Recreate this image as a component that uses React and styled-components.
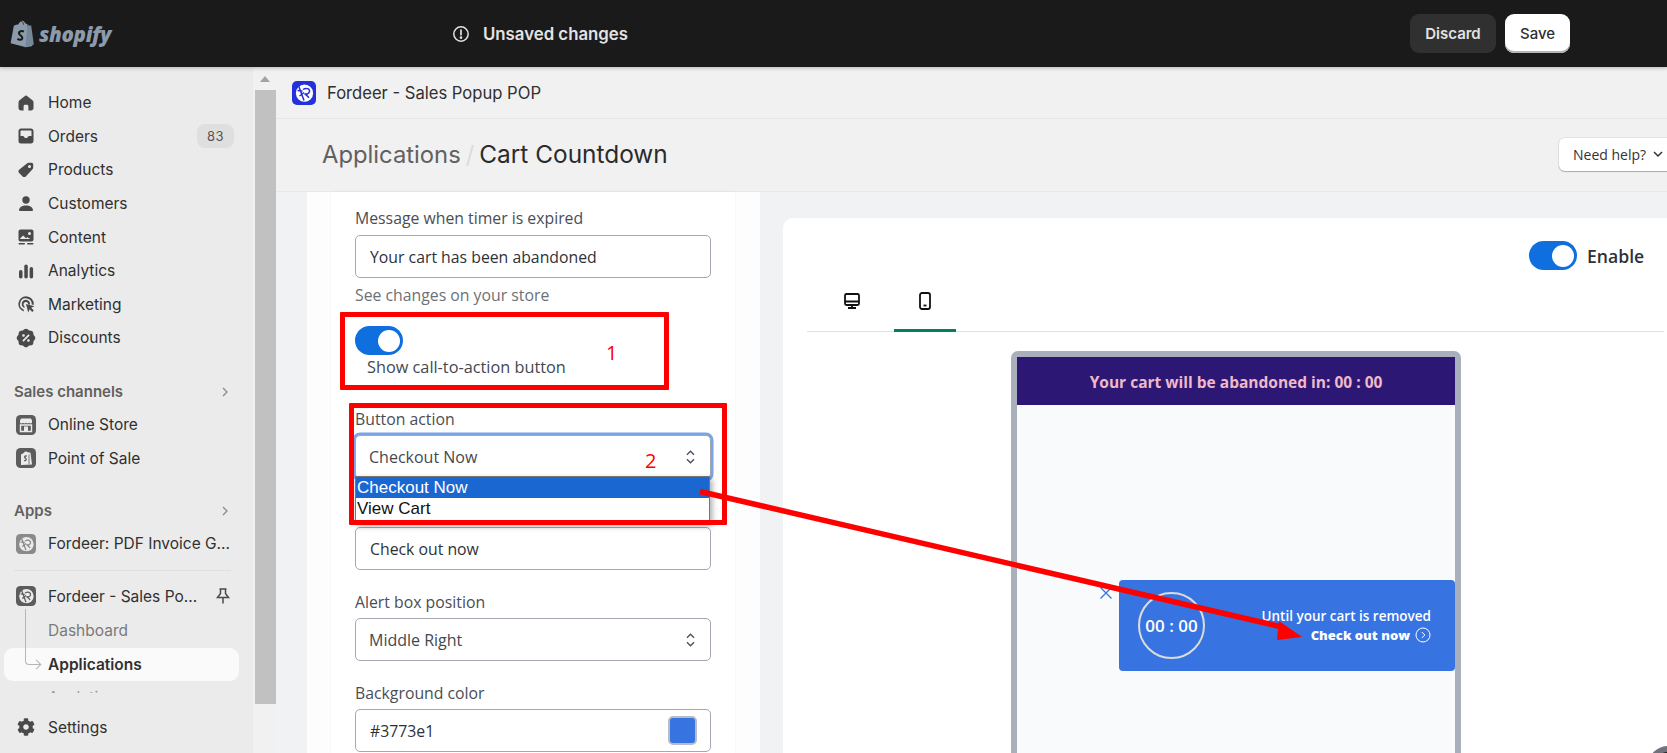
import styled, { createGlobalStyle } from 'styled-components';
import { FaCog } from 'react-icons/fa';
import { RiDiscountPercentFill } from 'react-icons/ri';

const GlobalStyle = createGlobalStyle`
  html, body { margin: 0; padding: 0; height: 100%; overflow: hidden; background: #f1f1f1; }
  * { box-sizing: border-box; }
`;

const Ico = ({ children }) => (
  <svg width="20" height="20" viewBox="0 0 20 20" fill="#4a4a4a">{children}</svg>
);

const HomeIcon = () => (
  <Ico><path d="M10 2.600c-.5 0-1 .2-1.400.6L3.500 7.300c-.7.6-1 1.300-1 2.200v5.500c0 1.400 1.100 2.500 2.500 2.500h2.600v-4.200c0-.9.700-1.600 1.500-1.600h1.800c.8 0 1.500.7 1.500 1.600v4.200H15c1.400 0 2.500-1.100 2.500-2.500V9.500c0-.9-.3-1.600-1-2.200l-5.100-4.100c-.4-.4-.9-.6-1.400-.6z" /></Ico>
);
const OrdersIcon = () => (
  <Ico><path fillRule="evenodd" d="M5 2.500h10c1.400 0 2.500 1.100 2.500 2.500v10c0 1.400-1.100 2.500-2.500 2.500H5A2.500 2.500 0 0 1 2.500 15V5C2.500 3.600 3.600 2.500 5 2.500zM4.500 10V5.300c0-.5.300-.8.800-.8h9.400c.5 0 .8.300.8.800V10h-2.300c-.6 0-1 .3-1.200.8-.3.800-1.100 1.300-2 1.300s-1.700-.5-2-1.300c-.2-.5-.6-.8-1.200-.8H4.500z" /></Ico>
);
const TagIcon = () => (
  <Ico><path fillRule="evenodd" d="M12.800 2.800h2.700c1 0 1.700.7 1.700 1.700v3c0 .8-.3 1.500-.9 2L9.800 16.400c-.9.900-2.300.9-3.200 0l-3.500-3.400c-.9-.9-.9-2.300 0-3.200l7.500-6.100c.6-.6 1.400-.9 2.200-.9zM13.500 8a1.500 1.500 0 1 0 0-3 1.500 1.500 0 0 0 0 3z" /></Ico>
);
const PersonIcon = () => (
  <Ico><circle cx="10" cy="6" r="3.700" /><path d="M3 16.300c0-2.900 3-4.900 7-4.900s7 2 7 4.900c0 .5-.4.800-.8.800H3.800c-.4 0-.8-.3-.8-.8z" /></Ico>
);
const ContentIcon = () => (
  <Ico>
    <path fillRule="evenodd" d="M4.500 2.500h11c1 0 2 .9 2 2v8c0 1-1 2-2 2h-11c-1 0-2-1-2-2v-8c0-1.100 1-2 2-2zM4 11.500l3.200-3 2.800 2.700 1.400-1 3 1.800H4.500zM13.500 5a1.500 1.500 0 1 0 0 3 1.500 1.500 0 0 0 0-3z" />
    <rect x="2.500" y="16" width="6.500" height="1.500" rx=".7" /><rect x="11" y="16" width="6.500" height="1.500" rx=".7" />
  </Ico>
);
const AnalyticsIcon = () => (
  <Ico><rect x="3" y="9" width="3.500" height="8.500" rx="1.700" /><rect x="8.300" y="3.500" width="3.500" height="14" rx="1.700" /><rect x="13.600" y="6" width="3.500" height="11.500" rx="1.700" /></Ico>
);
const MarketingIcon = () => (
  <Ico>
    <path d="M10 2.200a7.800 7.800 0 0 0-2 15.300l-.4-2A5.800 5.800 0 1 1 15.700 10.500l2 .5A7.800 7.800 0 0 0 10 2.200z" />
    <path d="M10 5.800a4.200 4.200 0 0 0-1.300 8.200l-.4-2a2.300 2.300 0 1 1 3.800-1.700l1.900.4A4.200 4.200 0 0 0 10 5.800z" />
    <path d="M10 10l8.500 2.300-3.300 1.500 2.600 2.600-1.600 1.500-2.500-2.600-1.500 3.200z" />
  </Ico>
);
const DiscountIcon = () => <RiDiscountPercentFill size={20} color="#4a4a4a" style={{ transform: 'scale(1.05)' }} />;
const ChannelIcon = ({ children }) => (
  <svg width="20" height="20" viewBox="0 0 20 20">
    <rect x="0" y="0" width="20" height="20" rx="4.500" fill="#5c5c5c" />
    {children}
  </svg>
);
const StoreIcon = () => (
  <ChannelIcon>
    <path d="M4 5.500 5 3.500h10l1 2v2.200c-.6 1-2.300 1-3 0-.7 1-2.300 1-3 0-.7 1-2.300 1-3 0-.7 1-2.400 1-3 0z" fill="#ebebeb" />
    <path d="M4.500 10h11v6.500h-11z" fill="none" stroke="#ebebeb" strokeWidth="1.400" />
    <rect x="8" y="11.500" width="4" height="5" fill="#ebebeb" />
  </ChannelIcon>
);
const PosIcon = () => (
  <ChannelIcon>
    <path d="M5 6.500 8 4.800c.8-1.400 2.300-1.500 3-.8l3.500.7L16 16.500 5 17z" fill="#ebebeb" />
    <path d="M10.800 8.200c-1.800-.7-3 .8-1.300 2 1.600 1.100.5 3-1.500 2.200" fill="none" stroke="#5c5c5c" strokeWidth="1.300" />
    <path d="M13 6.500v9.500" stroke="#5c5c5c" strokeWidth=".8" />
  </ChannelIcon>
);

// small feathered mark used for the Fordeer app, tile colour varies
const FordeerLogo = ({ size = 20, tile = '#5c5c5c', disc = '#ebebeb' }) => (
  <svg width={size} height={size} viewBox="0 0 24 24">
    <rect width="24" height="24" rx="5" fill={tile} />
    <circle cx="12.500" cy="12.200" r="8.600" fill={disc} />
    <path d="M6.500 4.500 12 19.500M5.500 9.500 10.500 10M7.500 15 12 11.500M11 8.500c3.200-2.200 7-.8 6.500 2.200-.3 2-3 2.600-5 2 2 .8 3 2.500 4.500 4" fill="none" stroke={tile} strokeWidth="1.500" />
  </svg>
);

const PinIcon = () => (
  <svg width="18" height="18" viewBox="0 0 18 18" fill="none" stroke="#4a4a4a" strokeWidth="1.500">
    <path d="M5.500 2h7M6.500 2v4.500L3.500 10.500h11L11.500 6.500V2M9 10.500V16.500" />
  </svg>
);
const Chevron = () => (
  <svg width="12" height="12" viewBox="0 0 12 12" fill="none" stroke="#8a8a8a" strokeWidth="1.300"><path d="M4 2l4 4-4 4" /></svg>
);
const UpDown = () => (
  <svg width="11" height="16" viewBox="0 0 12 18" fill="none" stroke="#4a515b" strokeWidth="1.500"><path d="M2 6.500 6 2.500l4 4M2 11.500l4 4 4-4" /></svg>
);
const DesktopIcon = () => (
  <svg width="18" height="18" viewBox="0 0 18 18" fill="none" stroke="#111" strokeWidth="1.800">
    <rect x="2" y="2" width="14" height="11" rx="1.500" /><path d="M2 9.500h14M9 13v3M5 16h8" />
  </svg>
);
const MobileIcon = () => (
  <svg width="18" height="18" viewBox="0 0 18 18" fill="none" stroke="#111" strokeWidth="1.800">
    <rect x="4" y="1" width="10" height="16" rx="2" /><path d="M7.500 13.500h3" />
  </svg>
);

const App = () => {
  return (
    <Page>
      <GlobalStyle />
      <TopBar>
        <LogoSlot>
          <svg width="25" height="29" viewBox="0 0 31 34">
            <path d="M2 29 6 7.500l6-2.500C13 2 15.500 .5 17.500 1.500c1 .3 2.500 2 3 3l2 .7L29 32.500 21 34z" fill="#8c9bac" />
            <path d="M20.500 33.700 23 5.500l2 1.500 2.500.2 3.300 23.300z" fill="#76879a" />
            <path d="M10.500 6.500c.7-3 3-5 5-4.500 1.500.3 2.500 2.300 2.500 4" fill="none" stroke="#1a1a1a" strokeWidth="1" />
            <path d="M18.500 14.500c-4-1.800-7.500 .7-5.500 3.500 1.300 1.700 4 2.500 3.500 5-.5 2.300-3.800 2.300-6 .7" fill="none" stroke="#1a1a1a" strokeWidth="2.600" />
          </svg>
          <LogoText>shopify</LogoText>
        </LogoSlot>
        <SaveNote>
          <svg width="18" height="18" viewBox="0 0 18 18" fill="none" stroke="#e3e3e3" strokeWidth="1.500">
            <circle cx="9" cy="9" r="7.200" /><path d="M9 5v4.700" strokeLinecap="round" strokeWidth="1.700" /><circle cx="9" cy="12.600" r=".6" fill="#e3e3e3" />
          </svg>
          <span>Unsaved changes</span>
        </SaveNote>
        <BarActions>
          <DiscardBtn>Discard</DiscardBtn>
          <SaveBtn>Save</SaveBtn>
        </BarActions>
      </TopBar>

      <Body>
        <Sidebar>
          <NavGroup>
            <NavItem><HomeIcon /><NavText>Home</NavText></NavItem>
            <NavItem><OrdersIcon /><NavText>Orders</NavText><Badge>83</Badge></NavItem>
            <NavItem><TagIcon /><NavText>Products</NavText></NavItem>
            <NavItem><PersonIcon /><NavText>Customers</NavText></NavItem>
            <NavItem><ContentIcon /><NavText>Content</NavText></NavItem>
            <NavItem><AnalyticsIcon /><NavText>Analytics</NavText></NavItem>
            <NavItem><MarketingIcon /><NavText>Marketing</NavText></NavItem>
            <NavItem><DiscountIcon /><NavText>Discounts</NavText></NavItem>
          </NavGroup>
          <SectionHead $top={25}>Sales channels<Chevron /></SectionHead>
          <NavItem><StoreIcon /><NavText>Online Store</NavText></NavItem>
          <NavItem><PosIcon /><NavText>Point of Sale</NavText></NavItem>
          <SectionHead $top={24}>Apps<Chevron /></SectionHead>
          <NavItem><FordeerLogo tile="#8a8a8a" /><NavText>Fordeer: PDF Invoice G...</NavText></NavItem>
          <NavDivider />
          <NavItem>
            <FordeerLogo />
            <NavText>Fordeer - Sales Po...</NavText>
            <PinSlot><PinIcon /></PinSlot>
          </NavItem>
          <SubItem>Dashboard</SubItem>
          <ActiveItem>
            <TreeLine />
            Applications
          </ActiveItem>
          <ClippedItem>Analytics</ClippedItem>
          <SettingsRow>
            <NavItem><FaCog size={18} color="#4a4a4a" style={{ margin: '0 1px' }} /><NavText>Settings</NavText></NavItem>
          </SettingsRow>
        </Sidebar>

        <ScrollTrack>
          <ScrollArrow />
          <ScrollThumb />
        </ScrollTrack>

        <Main>
          <AppHeader>
            <FordeerLogo size={24} tile="#2430d9" disc="#ffffff" />
            <AppName>Fordeer - Sales Popup POP</AppName>
          </AppHeader>
          <PageHeader>
            <Crumb>Applications</Crumb>
            <CrumbSep>/</CrumbSep>
            <PageTitle>Cart Countdown</PageTitle>
            <HelpBtn>
              Need help?
              <svg width="12" height="12" viewBox="0 0 12 12" fill="none" stroke="#333" strokeWidth="1.500"><path d="M2 4l4 4 4-4" /></svg>
            </HelpBtn>
          </PageHeader>

          <Columns>
            <FormOuter>
              <FormCard>
                <Label>Message when timer is expired</Label>
                <TextBox $top={6}>Your cart has been abandoned</TextBox>
                <Helper>See changes on your store</Helper>
                <Toggle $top={20} />
                <ToggleLabel>Show call-to-action button</ToggleLabel>
                <Label $top={31}>Button action</Label>
                <SelectBox $top={5} $focused>
                  <span>Checkout Now</span>
                  <UpDown />
                </SelectBox>
                <TextBox $top={48}>Check out now</TextBox>
                <Label $top={22}>Alert box position</Label>
                <SelectBox $top={5}>
                  <span>Middle Right</span>
                  <UpDown />
                </SelectBox>
                <Label $top={22}>Background color</Label>
                <TextBox $top={5}>
                  #3773e1
                  <Swatch />
                </TextBox>
              </FormCard>
            </FormOuter>

            <PreviewCard>
              <EnableRow>
                <Toggle />
                <EnableText>Enable</EnableText>
              </EnableRow>
              <Tabs>
                <Tab><DesktopIcon /></Tab>
                <Tab $active><MobileIcon /></Tab>
              </Tabs>
              <Phone>
                <PhoneBar>Your cart will be abandoned in: 00 : 00</PhoneBar>
                <PhoneScreen>
                  <CloseMark>
                    <svg width="14" height="14" viewBox="0 0 14 14" fill="none" stroke="#3773e1" strokeWidth="1.300"><path d="M1.500 1.500l11 11M12.500 1.500l-11 11" /></svg>
                  </CloseMark>
                  <Popup>
                    <TimerCircle>00 : 00</TimerCircle>
                    <PopupText>
                      <PopupLine>Until your cart is removed</PopupLine>
                      <PopupCta>
                        Check out now
                        <svg width="16" height="16" viewBox="0 0 16 16" fill="none" stroke="#fff" strokeWidth="1"><circle cx="8" cy="8" r="7" /><path d="M6.800 5l3 3-3 3" /></svg>
                      </PopupCta>
                    </PopupText>
                  </Popup>
                </PhoneScreen>
              </Phone>
            </PreviewCard>
          </Columns>
        </Main>
      </Body>

      {/* native select list and the annotations sit on top of everything */}
      <DropList>
        <DropOption $selected>Checkout Now</DropOption>
        <DropOption>View Cart</DropOption>
      </DropList>
      <RedBox $x={340} $y={312} $w={329} $h={78} />
      <RedBox $x={349} $y={403} $w={378} $h={122} />
      <RedNumber $x={606} $y={338}>1</RedNumber>
      <RedNumber $x={645} $y={446}>2</RedNumber>
      <ArrowLayer width="1667" height="753" viewBox="0 0 1667 753">
        <path d="M700 491.500 1282 627" stroke="#f00" strokeWidth="5.500" fill="none" />
        <path d="M1302 637 1277 640 1279 621z" fill="#f00" />
      </ArrowLayer>
      <CornerBubble />
    </Page>
  );
}

const Page = styled.div`
  position: relative;
  width: 1667px;
  height: 753px;
  overflow: hidden;
  font-family: Inter, "Liberation Sans", sans-serif;
  background: #f1f1f1;
`;

const TopBar = styled.div`
  position: relative;
  z-index: 2;
  display: flex;
  align-items: center;
  height: 67px;
  background: #1a1a1a;
  box-shadow: 0 1px 4px rgba(0, 0, 0, .25);
`;

const LogoSlot = styled.div`
  display: flex;
  align-items: center;
  gap: 5px;
  width: 452px;
  padding-left: 9px;
`;

const LogoText = styled.span`
  font-family: "Open Sans", sans-serif;
  font-style: italic;
  font-weight: 800;
  font-size: 20.500px;
  letter-spacing: -.3px;
  color: #8c9bac;
`;

const SaveNote = styled.div`
  display: flex;
  align-items: center;
  gap: 13px;
  font-size: 16.800px;
  font-weight: 600;
  color: #e3e3e3;
`;

const BarActions = styled.div`
  display: flex;
  gap: 9px;
  margin-left: auto;
  margin-right: 97px;
`;

const DiscardBtn = styled.button`
  width: 86px;
  height: 39px;
  border: 0;
  border-radius: 9px;
  background: #303030;
  color: #e3e3e3;
  font: 600 15px Inter, sans-serif;
`;

const SaveBtn = styled.button`
  width: 65px;
  height: 39px;
  border: 0;
  border-radius: 9px;
  background: #fff;
  box-shadow: inset 0 -2px 0 #b5b5b5;
  color: #303030;
  font: 500 15px Inter, sans-serif;
`;

const Body = styled.div`
  display: flex;
  height: 686px;
`;

const Sidebar = styled.nav`
  position: relative;
  flex: 0 0 253px;
  padding-top: 19px;
  background: #ebebeb;
  color: #303030;
`;

const NavGroup = styled.div`
  display: flex;
  flex-direction: column;
`;

const NavItem = styled.div`
  display: flex;
  align-items: center;
  height: 33.600px;
  padding-left: 16px;
  color: #303030;
`;

const NavText = styled.span`
  margin-left: 12px;
  font-size: 15.500px;
  white-space: nowrap;
`;

const Badge = styled.span`
  margin-left: auto;
  margin-right: 19px;
  padding: 2px 10px;
  border-radius: 8px;
  background: #dfdfdf;
  color: #555;
  font-size: 13px;
  line-height: 20px;
  letter-spacing: .5px;
`;

const SectionHead = styled.div`
  display: flex;
  align-items: center;
  justify-content: space-between;
  height: 24px;
  margin-top: ${(p) => p.$top}px;
  margin-bottom: 4px;
  padding: 0 22px 0 14px;
  color: #616161;
  font-size: 15px;
  font-weight: 600;
`;

const NavDivider = styled.div`
  height: 1px;
  margin: 9px 22px 9px 14px;
  background: #dfdfdf;
`;

const PinSlot = styled.span`
  display: flex;
  margin-left: auto;
  margin-right: 21px;
`;

const SubItem = styled.div`
  height: 33.600px;
  margin-top: 1px;
  padding-left: 48px;
  color: #7a7a7a;
  font-size: 15.500px;
  line-height: 33.600px;
`;

const ActiveItem = styled.div`
  position: relative;
  height: 33px;
  margin: 0 14px 0 4px;
  padding-left: 44px;
  border-radius: 9px;
  background: #fafafa;
  color: #303030;
  font-size: 15.500px;
  font-weight: 600;
  line-height: 33px;
`;

const TreeLine = styled.span`
  position: absolute;
  left: 21px;
  top: -39px;
  width: 15px;
  height: 56px;
  border-left: 1.500px solid #b5b5b5;
  border-bottom: 1.500px solid #b5b5b5;
  border-bottom-left-radius: 4px;
  &::after {
    content: '';
    position: absolute;
    right: 0;
    bottom: -4px;
    width: 6px;
    height: 6px;
    border-top: 1.500px solid #b5b5b5;
    border-right: 1.500px solid #b5b5b5;
    transform: rotate(45deg);
  }
`;

const ClippedItem = styled.div`
  height: 12px;
  padding-left: 48px;
  overflow: hidden;
  color: #9a9a9a;
  font-size: 15.500px;
  line-height: 33px;
`;

const SettingsRow = styled.div`
  position: absolute;
  left: 0;
  right: 0;
  bottom: 5px;
  height: 42px;
  display: flex;
  align-items: center;
  background: #ebebeb;
`;

const ScrollTrack = styled.div`
  flex: 0 0 23px;
  padding-left: 2px;
  background: #f1f1f1;
`;

const ScrollArrow = styled.div`
  width: 0;
  height: 0;
  margin: 9px 0 8px 5px;
  border-left: 5.500px solid transparent;
  border-right: 5.500px solid transparent;
  border-bottom: 6px solid #a3a3a3;
`;

const ScrollThumb = styled.div`
  width: 21px;
  height: 614px;
  background: #c1c1c1;
`;

const Main = styled.main`
  flex: 1;
  min-width: 0;
  background: #f1f1f1;
`;

const AppHeader = styled.div`
  display: flex;
  align-items: center;
  gap: 11px;
  height: 52px;
  padding-left: 16px;
  border-bottom: 1px solid #e6e6e6;
`;

const AppName = styled.span`
  color: #303030;
  font-size: 16.600px;
`;

const PageHeader = styled.div`
  display: flex;
  align-items: center;
  height: 73px;
  padding: 0 0 2px 46px;
  border-bottom: 1px solid #e9e9e9;
`;

const Crumb = styled.span`
  color: #616161;
  font-size: 23.800px;
`;

const CrumbSep = styled.span`
  margin: 0 5px;
  color: #dcdcdc;
  font-size: 23.800px;
`;

const PageTitle = styled.span`
  color: #2b2b2b;
  font-size: 24.400px;
`;

const HelpBtn = styled.div`
  display: flex;
  align-items: center;
  gap: 6px;
  margin-left: auto;
  margin-right: -2px;
  flex: 0 0 110px;
  height: 33px;
  padding-left: 14px;
  border-radius: 6px 0 0 6px;
  background: #fff;
  box-shadow: 0 1px 1px rgba(0, 0, 0, .25), 0 0 0 1px #e3e3e3;
  color: #333;
  font-family: "Open Sans", sans-serif;
  font-size: 14px;
  white-space: nowrap;
`;

const Columns = styled.div`
  display: flex;
  align-items: flex-start;
  gap: 23px;
  height: 561px;
  padding-left: 31px;
  background: #f1f2f4;
`;

const FormOuter = styled.div`
  flex: 0 0 453px;
  height: 100%;
  padding: 0 25px 0 24px;
  background: #fdfdfd;
`;

const FormCard = styled.div`
  height: 100%;
  padding: 16px 24px 0;
  background: #fff;
  box-shadow: 0 0 2px rgba(0, 0, 0, .06);
  font-family: "Open Sans", sans-serif;
  color: #44494f;
`;

const Label = styled.div`
  margin-top: ${(p) => p.$top || 0}px;
  font-size: 15.800px;
  line-height: 21px;
  color: #4a4e54;
`;

const TextBox = styled.div`
  display: flex;
  align-items: center;
  justify-content: space-between;
  height: 43px;
  margin-top: ${(p) => p.$top || 0}px;
  padding: 0 13px 0 14px;
  border: 1px solid #a3a8b3;
  border-radius: 5px;
  background: #fff;
  color: #2e3238;
  font-size: 15.800px;
`;

const SelectBox = styled(TextBox)`
  padding: 0 14px 0 13px;
  color: #44494f;
  font-size: 16px;
  ${(p) => p.$focused && 'box-shadow: 0 0 0 2.500px #7ba4e6; height: 44px;'}
`;

const Helper = styled.div`
  margin-top: 7px;
  color: #6d7175;
  font-size: 15.800px;
  line-height: 21px;
`;

const Toggle = styled.div`
  position: relative;
  flex: none;
  width: 48px;
  height: 29px;
  margin-top: ${(p) => p.$top || 0}px;
  border-radius: 15px;
  background: #0f6fde;
  &::after {
    content: '';
    position: absolute;
    top: 3.500px;
    right: 3.500px;
    width: 22px;
    height: 22px;
    border-radius: 50%;
    background: #fff;
  }
`;

const ToggleLabel = styled.div`
  margin: 2px 0 0 12px;
  color: #44494f;
  font-size: 16.300px;
  line-height: 21px;
`;

const Swatch = styled.span`
  width: 29px;
  height: 29px;
  border: 2px solid #b8bcc4;
  border-radius: 5px;
  background: #3773e1;
`;

const PreviewCard = styled.section`
  flex: 0 0 900px;
  height: 560px;
  margin-top: 26px;
  padding: 23px 0 0 24px;
  border-radius: 10px 0 0 0;
  background: #fff;
  font-family: "Open Sans", sans-serif;
`;

const EnableRow = styled.div`
  display: flex;
  align-items: center;
  gap: 10px;
  padding-left: 722px;
`;

const EnableText = styled.span`
  color: #2e3238;
  font-size: 17.600px;
  font-weight: 600;
`;

const Tabs = styled.div`
  display: flex;
  width: 857px;
  height: 62px;
  padding-left: 14px;
  border-bottom: 1px solid #dfe1e5;
`;

const Tab = styled.div`
  display: flex;
  align-items: center;
  justify-content: center;
  width: 62px;
  height: 62px;
  margin-right: 11px;
  padding-top: 3px;
  border-bottom: 3px solid ${(p) => (p.$active ? '#008060' : 'transparent')};
`;

const Phone = styled.div`
  width: 450px;
  height: 460px;
  margin: 19px 0 0 204px;
  border: 6px solid #a9b0bc;
  border-radius: 7px;
  background: #f9fafc;
`;

const PhoneBar = styled.div`
  height: 48px;
  background: #2c1874;
  color: #f0b8c8;
  font-size: 15.500px;
  font-weight: 700;
  line-height: 50px;
  text-align: center;
`;

const PhoneScreen = styled.div`
  position: relative;
  height: 400px;
`;

const CloseMark = styled.span`
  position: absolute;
  left: 82px;
  top: 181px;
  display: flex;
`;

const Popup = styled.div`
  position: absolute;
  top: 175px;
  right: 0;
  display: flex;
  align-items: center;
  justify-content: space-between;
  width: 336px;
  height: 91px;
  padding: 0 24px 0 19px;
  border-radius: 4px;
  background: #3773e1;
  color: #fff;
`;

const TimerCircle = styled.div`
  display: flex;
  align-items: center;
  justify-content: center;
  width: 67px;
  height: 67px;
  border: 2px solid #dcdcdc;
  border-radius: 50%;
  font-size: 17px;
  font-weight: 600;
  white-space: nowrap;
`;

const PopupText = styled.div`
  display: flex;
  flex-direction: column;
  align-items: flex-end;
  gap: 1px;
`;

const PopupLine = styled.div`
  font-size: 13.500px;
  font-weight: 600;
  line-height: 18px;
`;

const PopupCta = styled.div`
  display: flex;
  align-items: center;
  gap: 5px;
  font-size: 13px;
  font-weight: 800;
  line-height: 18px;
`;

const DropList = styled.div`
  position: absolute;
  left: 355px;
  top: 476px;
  width: 355px;
  height: 47px;
  border: 1px solid #767676;
  border-bottom: 0;
  background: #fff;
  box-shadow: 2px 3px 6px rgba(0, 0, 0, .35);
  font-family: "Liberation Sans", Arial, sans-serif;
  font-size: 17px;
`;

const DropOption = styled.div`
  height: 21px;
  padding-left: 1px;
  background: ${(p) => (p.$selected ? '#1a67d2' : '#fff')};
  color: ${(p) => (p.$selected ? '#fff' : '#111')};
  line-height: 21px;
`;

const RedBox = styled.div`
  position: absolute;
  left: ${(p) => p.$x}px;
  top: ${(p) => p.$y}px;
  width: ${(p) => p.$w}px;
  height: ${(p) => p.$h}px;
  border: 5px solid #f00;
  border-radius: 1px;
`;

const RedNumber = styled.span`
  position: absolute;
  left: ${(p) => p.$x}px;
  top: ${(p) => p.$y}px;
  color: #f00;
  font-family: "Open Sans", sans-serif;
  font-size: 20px;
  line-height: 30px;
`;

const ArrowLayer = styled.svg`
  position: absolute;
  left: 0;
  top: 0;
  pointer-events: none;
`;

const CornerBubble = styled.div`
  position: absolute;
  left: 1648px;
  top: 746px;
  width: 40px;
  height: 40px;
  border: 6px solid #70737c;
  border-radius: 50%;
  background: #222;
`;

export default App
